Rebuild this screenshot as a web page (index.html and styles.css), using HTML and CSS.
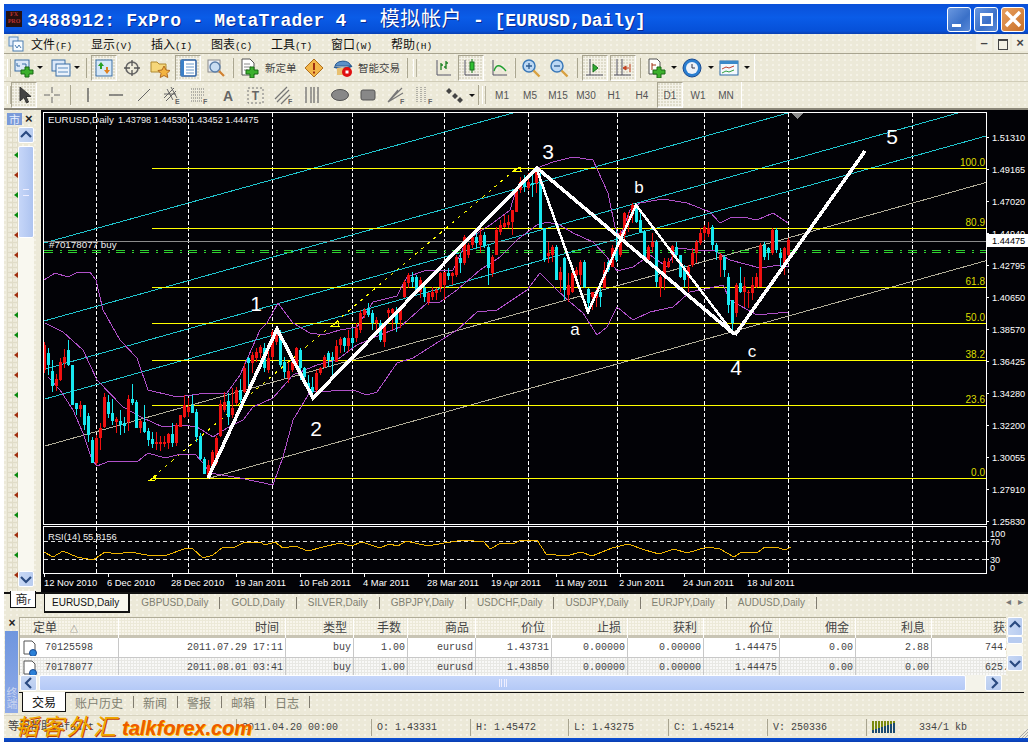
FILE: index.html
```html
<!DOCTYPE html>
<html lang="zh">
<head>
<meta charset="utf-8">
<title>MetaTrader 4</title>
<link rel="stylesheet" href="styles.css">
</head>
<body>
<div class="window">
  <header class="titlebar">
    <div class="appicon">FX<br>PRO</div>
    <div class="titletext"><span class="tt-a">3488912: FxPro - MetaTrader 4 - </span><span class="cjk">模拟帐户</span> - [EURUSD,Daily]</div>
    <div class="winbtns">
      <div class="wb"><span class="wb-min"></span></div>
      <div class="wb"><span class="wb-max"></span></div>
      <div class="wb wb-close"><svg viewBox="0 0 20 20" width="20" height="20"><path d="M3 3L17 17M17 3L3 17" stroke="#fff" stroke-width="3.4"/></svg></div>
    </div>
  </header>

  <nav class="menubar">
    <svg class="menuicon" viewBox="0 0 16 16" width="16" height="16"><rect x="1" y="1" width="9" height="9" fill="#dfeaf8" stroke="#5a8cc0"/><rect x="5" y="5" width="10" height="10" fill="#f6fbff" stroke="#4a7cb0"/><path d="M7 9l2 3 2-3 2 3" stroke="#4a7cb0" fill="none"/></svg>
    <span class="mi">文件<em>(F)</em></span><span class="mi">显示<em>(V)</em></span><span class="mi">插入<em>(I)</em></span><span class="mi">图表<em>(C)</em></span><span class="mi">工具<em>(T)</em></span><span class="mi">窗口<em>(W)</em></span><span class="mi">帮助<em>(H)</em></span>
    <div class="mdibtns"><span>&#8211;</span><span class="mdi-r"></span><span>&#215;</span></div>
  </nav>

  <div class="toolrow">
    <div class="toolbar tb1">
      <i class="grip w8"></i>
      <b class="btn w24"><svg class="i" viewBox="0 0 20 20"><rect x="1" y="2" width="14" height="11" fill="#dbe8f8" stroke="#3a6ea5"/><path d="M3 5v3h3M8 6h4v3" stroke="#3a6ea5" fill="none"/><path d="M11 9h4v3h4v4h-4v3h-4v-3H7v-4h4z" fill="#3cb02c" stroke="#1b6b14"/></svg></b>
      <b class="dd w8"></b><i class="w4"></i>
      <b class="btn w25"><svg class="i" viewBox="0 0 20 20"><rect x="1" y="2" width="13" height="11" fill="#dbe8f8" stroke="#3a6ea5"/><rect x="5" y="6" width="14" height="12" fill="#eaf2fb" stroke="#3a6ea5"/><path d="M7 10h10M7 14h10" stroke="#5a8cc0"/></svg></b>
      <b class="dd w8"></b>
      <i class="sep w9"></i>
      <b class="btn w28 on"><svg class="i" viewBox="0 0 20 20"><rect x="2" y="2" width="16" height="16" fill="#d6e8f8" stroke="#3a6ea5"/><path d="M7 4l3 4H8v3H6V8H4z" fill="#28a028"/><path d="M13 16l-3-4h2V9h2v3h2z" fill="#e08020"/></svg></b>
      <b class="btn w28"><svg class="i" viewBox="0 0 20 20"><circle cx="10" cy="10" r="6" fill="none" stroke="#666" stroke-width="1.6"/><path d="M10 2v6M10 12v6M2 10h6M12 10h6" stroke="#555" stroke-width="1.3"/></svg></b>
      <b class="btn w28"><svg class="i" viewBox="0 0 20 20"><path d="M1 4h6l2 2h7v8H1z" fill="#f6d77a" stroke="#b08a30"/><path d="M14 8l2 4 4 .5-3 3 .8 4-3.800-2-3.800 2 .8-4-3-3 4-.5z" fill="#f3b340" stroke="#b06a20"/></svg></b>
      <b class="btn w28 on"><svg class="i" viewBox="0 0 20 20"><rect x="3" y="2" width="15" height="16" rx="1" fill="#fff" stroke="#2a5ea0" stroke-width="1.5"/><path d="M3 2v16h3V2z" fill="#3a80c8"/><path d="M8 6h8M8 9h8M8 12h8M8 15h8" stroke="#6a98c8"/></svg></b>
      <b class="btn w28"><svg class="i" viewBox="0 0 20 20"><rect x="2" y="2" width="12" height="12" fill="#eef2f8" stroke="#888"/><circle cx="9" cy="9" r="5" fill="#c8ddf2" stroke="#5a7ea8" stroke-width="1.4"/><path d="M13 13l5 5" stroke="#d08030" stroke-width="2.200"/></svg></b>
      <i class="sep w6"></i>
      <b class="btn w64"><svg class="i" viewBox="0 0 20 20"><path d="M3 1h8l4 4v12H3z" fill="#fff" stroke="#555"/><path d="M5 6h6M5 9h7M5 12h4" stroke="#888"/><path d="M11 9h4v3h4v4h-4v4h-4v-4H7v-4h4z" fill="#3cb02c" stroke="#1b6b14"/></svg><span class="tt">新定单</span></b>
      <b class="btn w28"><svg class="i" viewBox="0 0 20 20"><path d="M10 1l9 9-9 9-9-9z" fill="#f2b64a" stroke="#b0701c"/><path d="M10 5v7M10 13.500v2" stroke="#a03010" stroke-width="2"/></svg></b>
      <i class="w1"></i>
      <b class="btn w75"><svg class="i" viewBox="0 0 20 20"><path d="M2 8c1-6 14-7 16 0z" fill="#5a90c8" stroke="#2a5a90"/><path d="M1 9c5 2 13 2 18-1" stroke="#2a5a90" fill="none" stroke-width="1.5"/><path d="M4 10h11v7H4z" fill="#e8c070"/><circle cx="14" cy="14" r="5" fill="#e01010"/><rect x="12.500" y="12.500" width="3" height="3" fill="#fff"/></svg><span class="tt">智能交易</span></b>
      <i class="sep w6"></i><i class="grip w19"></i>
      <b class="btn w28"><svg class="i" viewBox="0 0 20 20"><path d="M4 2v15h14" stroke="#556" fill="none"/><path d="M8 5v7M8 7h2M13 3v8M13 5h2M11 9h2" stroke="#1a8020" fill="none" stroke-width="1.300"/></svg></b>
      <b class="btn w28 on"><svg class="i" viewBox="0 0 20 20"><path d="M4 2v15h14" stroke="#556" fill="none"/><path d="M11 1v14" stroke="#1a8020"/><rect x="9" y="4" width="4" height="8" fill="#30c030" stroke="#1a7020"/></svg></b>
      <b class="btn w28"><svg class="i" viewBox="0 0 20 20"><path d="M4 2v15h14" stroke="#556" fill="none"/><path d="M5 13c2-7 6-7 12 0" stroke="#20a030" fill="none" stroke-width="1.300"/></svg></b>
      <i class="sep w4"></i>
      <b class="btn w28"><svg class="i" viewBox="0 0 20 20"><circle cx="8" cy="8" r="6" fill="#bcd8f4" stroke="#3a78b8" stroke-width="1.500"/><path d="M5 8h6M8 5v6" stroke="#2a5a90" stroke-width="1.300"/><path d="M12.500 12.500l6 6" stroke="#d8a040" stroke-width="2.400"/></svg></b>
      <b class="btn w28"><svg class="i" viewBox="0 0 20 20"><circle cx="8" cy="8" r="6" fill="#bcd8f4" stroke="#3a78b8" stroke-width="1.500"/><path d="M5 8h6" stroke="#2a5a90" stroke-width="1.300"/><path d="M12.500 12.500l6 6" stroke="#d8a040" stroke-width="2.400"/></svg></b>
      <i class="sep w8"></i>
      <b class="btn w28 on"><svg class="i" viewBox="0 0 20 20"><path d="M5 1v16M1 17h17" stroke="#556" fill="none"/><path d="M8 6l5 4-5 4z" fill="#30b030" stroke="#1a7020"/></svg></b>
      <b class="btn w28 on"><svg class="i" viewBox="0 0 20 20"><path d="M4 1v16M9 1v16M1 17h17" stroke="#556" fill="none"/><path d="M17 6v8M16 10l-5 0M13 8l-3 2 3 2z" stroke="#c04020" fill="#e05020"/></svg></b>
      <i class="sep w6"></i>
      <b class="btn w26"><svg class="i" viewBox="0 0 20 20"><path d="M3 1h8l3 3v12H3z" fill="#fff" stroke="#555"/><path d="M6 5v7M6 7h4" stroke="#a03010"/><path d="M11 9h4v3h4v4h-4v4h-4v-4H7v-4h4z" fill="#3cb02c" stroke="#1b6b14"/></svg></b><b class="dd w10"></b>
      <b class="btn w26"><svg class="i" viewBox="0 0 20 20"><circle cx="10" cy="10" r="9" fill="#2a7ed0" stroke="#1a4a90"/><circle cx="10" cy="10" r="6" fill="#eef2f8"/><path d="M10 6v4h3" stroke="#334" fill="none"/></svg></b><b class="dd w11"></b>
      <b class="btn w26"><svg class="i" viewBox="0 0 20 20"><rect x="1" y="3" width="18" height="14" fill="#f4f8fc" stroke="#2a6aa8"/><path d="M1 3h18v3H1z" fill="#3a88c8"/><path d="M3 11l4-2 3 1 5-2" stroke="#c04030" fill="none"/><path d="M3 15l4-2 3 1 5-2" stroke="#30a040" fill="none"/></svg></b><b class="dd w10"></b>
    </div>
  </div>

  <div class="toolrow tall26">
    <div class="toolbar tb2">
      <i class="grip w6"></i>
      <b class="btn w28 on"><svg class="i" viewBox="0 0 20 20"><path d="M6 2v14l4-3.500 2.500 5.500 2-1-2.500-5.500h5z" fill="#444" stroke="#333"/></svg></b>
      <b class="btn w28"><svg class="i" viewBox="0 0 20 20"><path d="M10 2v6M10 12v6M2 10h6M12 10h6" stroke="#666"/></svg></b>
      <i class="sep w8"></i>
      <b class="btn w28"><svg class="i" viewBox="0 0 20 20"><path d="M10 3v14" stroke="#555" stroke-width="1.300"/></svg></b>
      <b class="btn w28"><svg class="i" viewBox="0 0 20 20"><path d="M3 10h14" stroke="#555" stroke-width="1.300"/></svg></b>
      <b class="btn w28"><svg class="i" viewBox="0 0 20 20"><path d="M4 16L16 4" stroke="#666"/></svg></b>
      <b class="btn w28"><svg class="i" viewBox="0 0 20 20"><path d="M2 13L12 3M4 16L14 6M5 4l6 11M9 2l6 11M2 9h12" stroke="#666" fill="none"/><text x="13" y="19" class="ic-l">E</text></svg></b>
      <b class="btn w28"><svg class="i" viewBox="0 0 20 20"><path d="M1 4h14M1 7h14M1 10h14M1 13h12M1 16h12" stroke="#777" stroke-dasharray="1 1" fill="none"/><text x="13" y="19" class="ic-l">F</text></svg></b>
      <b class="btn w28"><svg class="i" viewBox="0 0 20 20"><text x="10" y="16" class="ic-a">A</text></svg></b>
      <b class="btn w28"><svg class="i" viewBox="0 0 20 20"><rect x="2" y="3" width="15" height="15" fill="none" stroke="#777" stroke-dasharray="2 2"/><text x="9.500" y="15" class="ic-t">T</text></svg></b>
      <b class="btn w28"><svg class="i" viewBox="0 0 20 20"><path d="M1 14L13 2M3 17L15 5M7 19l9-9" stroke="#777" fill="none" stroke-width="1.200"/><text x="14" y="19" class="ic-l">F</text></svg></b>
      <b class="btn w28"><svg class="i" viewBox="0 0 20 20"><path d="M4 2v16M9 2v16M12 2v16M16 2v16" stroke="#666" stroke-width="1.200"/></svg></b>
      <b class="btn w28"><svg class="i" viewBox="0 0 20 20"><ellipse cx="10" cy="10" rx="8.500" ry="5.500" fill="#888" stroke="#555"/></svg></b>
      <b class="btn w28"><svg class="i" viewBox="0 0 20 20"><rect x="3" y="5" width="14" height="10" rx="2" fill="#888" stroke="#555"/></svg></b>
      <b class="btn w28"><svg class="i" viewBox="0 0 20 20"><path d="M2 17L16 3M2 17L17 8M2 17l10-12" stroke="#777" fill="none" stroke-width="1.200"/><text x="14" y="19" class="ic-l">F</text></svg></b>
      <b class="btn w28"><svg class="i" viewBox="0 0 20 20"><path d="M3 2v15M7 2v15M11 2v15" stroke="#777" stroke-dasharray="1 1" fill="none"/><text x="14" y="19" class="ic-l">F</text></svg></b>
      <i class="w3"></i>
      <b class="btn w26"><svg class="i" viewBox="0 0 20 20"><path d="M5 3l3 3-3 3-3-3zM11 8l3 3-3 3-3-3zM16 12l3 3-3 3-3-3z" fill="#444"/></svg></b><b class="dd w9"></b>
      <i class="sep w3"></i><i class="grip w9"></i>
      <b class="btn w28 tf">M1</b><b class="btn w28 tf">M5</b><b class="btn w28 tf">M15</b><b class="btn w28 tf">M30</b><b class="btn w28 tf">H1</b><b class="btn w28 tf">H4</b><b class="btn w28 tf on">D1</b><b class="btn w28 tf">W1</b><b class="btn w28 tf">MN</b>
    </div>
  </div>
  <div class="rule"></div>

  <main class="main">
    <aside class="side">
      <div class="side-head"><span class="side-tag">市</span><span class="side-x">&#215;</span></div>
      <div class="side-body">
        <div class="rows">
          <i class="g"></i><i class="r"></i><i class="g"></i><i class="g"></i><i class="r"></i><i class="r"></i><i class="r"></i><i class="r"></i><i class="g"></i><i class="g"></i><i class="r"></i><i class="r"></i><i class="g"></i><i class="r"></i><i class="r"></i><i class="r"></i><i class="g"></i><i class="r"></i><i class="g"></i><i class="r"></i><i class="g"></i><i class="r"></i>
        </div>
        <div class="vs">
          <span class="sbtn"><svg viewBox="0 0 16 16" width="16" height="16"><path d="M3 10l5-5 5 5" fill="none" stroke="#2a4a80" stroke-width="2.200"/></svg></span>
          <span class="thumb"><u></u></span>
          <span class="track"></span>
          <span class="sbtn"><svg viewBox="0 0 16 16" width="16" height="16"><path d="M3 6l5 5 5-5" fill="none" stroke="#2a4a80" stroke-width="2.200"/></svg></span>
        </div>
      </div>
    </aside>

    <svg class="chart" viewBox="41 110 987 482" width="987" height="482">
      <path class="grid" d="M96.500 113V524M188.500 113V524M272.500 113V524M352.500 113V524M444.500 113V524M528.500 113V524M617.500 113V524M704.500 113V524M788.500 113V524M912.500 113V524M96.500 527V573M188.500 527V573M272.500 527V573M352.500 527V573M444.500 527V573M528.500 527V573M617.500 527V573M704.500 527V573M788.500 527V573M912.500 527V573"/>
      <path class="cyanl" d="M44 243L513 113M44 321L788 113M45 369L958 113M45 399L986 136"/>
      <path class="tanl" d="M45 446L986 182.500M210 478L986 260.700"/>
      <path class="fib" d="M152 168.500H986M152 228.500H986M152 287.500H986M152 323.500H986M152 360.500H986M152 405.500H986M152 478.500H986"/>
      <path class="bidl" d="M44 241.500H986"/>
      <path class="ordl" d="M44 250.500H986M44 252.500H986"/>
      <path class="fibd" d="M153 477L517 168"/>
      <path class="fiba" d="M150 480l6-4-1 4zM332 326l6-5 1 5zM514 171l6-4 1 4z"/>
      <polyline class="bb" points="44,280 55,273 68,277 78,272 90,272 96,280 103,310 120,340 137,358 148,390 177,397 207,393 227,393 240,375 248,357 260,330 267,323 278,303 293,323 310,333 323,335 340,330 357,327 373,302 397,296 407,277 427,270 453,270 467,240 493,223 510,210 517,187 537,168 553,162 573,157 593,160 608,193 615,227 620,237 630,210 640,203 663,199 687,203 710,212 720,223 730,218 743,217 757,220 773,213 788,223"/>
      <polyline class="bb" points="45,323 63,332 83,350 97,380 123,407 143,418 163,427 183,425 197,427 213,437 227,428 243,420 253,407 273,398 293,375 317,365 337,360 357,345 380,335 400,327 427,303 440,302 457,290 480,270 500,257 517,240 537,225 547,222 560,225 573,233 593,242 607,257 617,271 633,267 650,255 667,267 677,248 697,250 713,250 730,260 760,268 780,265 788,267"/>
      <polyline class="bb" points="48,377 60,390 73,410 83,433 92,460 97,466 110,461 137,462 148,453 165,458 177,455 195,454 203,463 210,473 240,478 273,485 283,457 293,420 310,392 353,390 367,395 377,392 397,363 413,358 457,330 477,312 497,310 527,290 540,273 557,290 570,302 583,313 597,335 607,327 617,307 633,320 650,312 673,307 690,292 710,288 723,285 730,300 757,315 788,312"/>
      <path class="cw" d="M48.500 348V375M52.500 360V392M68.500 340V366M72.500 365V405M76.500 403V415M84.500 405V430M88.500 413V442M92.500 437V463M108.500 395V418M112.500 399V425M120.500 410V435M124.500 417V433M132.500 384V405M136.500 400V428M144.500 405V433M148.500 428V446M152.500 432V448M172.500 423V447M192.500 395V413M196.500 409V442M200.500 433V460M204.500 457V474M228.500 393V425M240.500 379V403M248.500 357V387M264.500 343V372M280.500 330V367M284.500 357V378M300.500 348V380M304.500 367V382M308.500 375V390M312.500 377V393M328.500 351V367M332.500 352V377M344.500 337V352M352.500 328V348M368.500 303V317M372.500 310V330M380.500 320V342M396.500 307V332M412.500 272V287M416.500 275V293M424.500 285V302M448.500 268V280M460.500 253V273M476.500 232V248M484.500 232V248M488.500 245V285M524.500 175V192M532.500 175V197M540.500 172V228M544.500 228V262M556.500 245V280M564.500 257V300M584.500 260V288M588.500 288V310M600.500 288V307M608.500 260V272M616.500 230V262M636.500 205V223M640.500 212V233M644.500 230V260M656.500 240V287M676.500 242V260M680.500 255V278M684.500 265V287M712.500 225V250M716.500 243V260M724.500 255V277M728.500 273V313M732.500 300V333M740.500 267V293M764.500 242V260M768.500 247V260M776.500 228V253M780.500 248V267"/>
      <path class="cb" d="M48.500 353V365M52.500 371V386M68.500 350V365M72.500 365V405M76.500 403V409M84.500 405V425M88.500 416V435M92.500 440V463M108.500 402V414M112.500 413V421M120.500 421V425M124.500 423V426M132.500 399V403M136.500 402V428M144.500 422V432M148.500 431V440M152.500 439V444M172.500 434V443M192.500 405V413M196.500 412V437M200.500 436V459M204.500 459V474M228.500 401V417M240.500 390V400M248.500 358V363M264.500 348V368M280.500 337V365M284.500 362V372M300.500 350V368M304.500 368V377M308.500 383V388M312.500 387V392M328.500 353V360M332.500 357V360M344.500 338V346M352.500 338V343M368.500 308V315M372.500 313V323M380.500 323V340M396.500 313V323M412.500 277V282M416.500 277V292M424.500 288V297M448.500 273V276M460.500 258V263M476.500 237V243M484.500 235V246M488.500 247V268M524.500 182V187M532.500 183V185M540.500 180V228M544.500 228V260M556.500 247V280M564.500 258V290M584.500 262V287M588.500 289V303M600.500 292V297M608.500 262V270M616.500 247V260M636.500 205V222M640.500 220V232M644.500 232V258M656.500 242V282M676.500 247V255M680.500 255V277M684.500 270V280M712.500 227V245M716.500 245V252M724.500 257V270M728.500 277V305M732.500 300V323M740.500 283V292M764.500 245V257M768.500 248V253M776.500 230V250M780.500 253V258"/>
      <path class="rw" d="M44.500 342V373M56.500 374V391M60.500 358V381M64.500 349V368M80.500 401V417M96.500 435V465M100.500 423V450M104.500 393V428M116.500 417V433M128.500 395V431M140.500 420V433M156.500 432V450M160.500 436V451M164.500 436V447M168.500 433V449M176.500 423V446M180.500 415V427M184.500 395V418M188.500 398V417M208.500 460V477M212.500 450V470M216.500 436V465M220.500 400V437M224.500 392V412M232.500 388V418M236.500 387V405M244.500 363V393M252.500 352V373M256.500 348V362M260.500 345V358M268.500 350V373M272.500 330V360M276.500 332V345M288.500 362V383M292.500 355V372M296.500 347V368M316.500 370V393M320.500 367V375M324.500 355V368M336.500 340V362M340.500 337V353M348.500 330V352M356.500 323V342M360.500 310V333M364.500 308V318M376.500 317V330M384.500 323V347M388.500 308V323M392.500 308V330M400.500 307V328M404.500 280V298M408.500 273V288M420.500 277V298M428.500 292V305M432.500 287V300M436.500 288V300M440.500 272V292M444.500 272V300M452.500 272V285M456.500 255V277M464.500 235V265M468.500 243V258M472.500 235V248M480.500 228V253M492.500 255V277M496.500 227V255M500.500 220V235M504.500 215V228M508.500 215V228M512.500 210V235M516.500 190V212M520.500 177V193M528.500 173V190M536.500 170V193M548.500 242V263M552.500 245V262M560.500 267V292M568.500 273V302M572.500 272V293M576.500 267V283M580.500 260V285M592.500 292V310M596.500 288V307M604.500 262V288M612.500 245V267M620.500 230V257M624.500 212V240M628.500 212V232M632.500 203V223M648.500 245V262M652.500 233V252M660.500 275V297M664.500 258V290M668.500 258V268M672.500 245V263M688.500 265V292M692.500 248V267M696.500 240V263M700.500 228V245M704.500 225V240M708.500 222V237M720.500 253V277M736.500 283V317M744.500 277V307M748.500 290V308M752.500 277V300M756.500 273V288M760.500 243V287M772.500 228V255M784.500 247V275M788.500 238V257"/>
      <path class="rb" d="M44.500 345V370M56.500 379V386M60.500 362V380M64.500 357V363M80.500 405V409M96.500 438V463M100.500 428V438M104.500 397V427M116.500 419V422M128.500 399V422M140.500 421V428M156.500 442V444M160.500 442V444M164.500 442V444M168.500 434V443M176.500 425V443M180.500 415V427M184.500 405V417M188.500 407V412M208.500 465V477M212.500 452V468M216.500 438V463M220.500 404V436M224.500 402V410M232.500 408V415M236.500 390V403M244.500 368V392M252.500 355V363M256.500 352V358M260.500 347V353M268.500 358V370M272.500 332V357M276.500 335V342M288.500 371V378M292.500 362V370M296.500 348V367M316.500 373V390M320.500 368V373M324.500 357V367M336.500 346V362M340.500 339V345M348.500 338V346M356.500 328V338M360.500 313V330M364.500 310V315M376.500 320V323M384.500 325V342M388.500 310V313M392.500 309V313M400.500 310V320M404.500 282V297M408.500 275V283M420.500 280V292M428.500 293V302M432.500 292V297M436.500 290V293M440.500 273V287M444.500 272V285M452.500 273V276M456.500 257V275M464.500 237V263M468.500 245V255M472.500 237V245M480.500 235V245M492.500 257V273M496.500 230V255M500.500 225V232M504.500 223V227M508.500 222V225M512.500 210V222M516.500 190V212M520.500 182V190M528.500 182V188M536.500 172V183M548.500 253V256M552.500 247V255M560.500 272V280M568.500 285V295M572.500 273V292M576.500 270V275M580.500 262V275M592.500 292V297M596.500 292V298M604.500 270V288M612.500 248V267M620.500 233V255M624.500 213V235M628.500 218V223M632.500 205V215M648.500 247V260M652.500 242V247M660.500 277V287M664.500 261V277M668.500 262V267M672.500 246V255M688.500 267V277M692.500 253V265M696.500 242V253M700.500 233V243M704.500 227V233M708.500 228V234M720.500 255V260M736.500 285V313M744.500 286V292M748.500 292V293M752.500 285V293M756.500 277V287M760.500 245V287M772.500 230V253M784.500 248V263M788.500 240V255"/>
      <path class="wave" d="M208 478L277 329L313 398L537 168L734 334M735 335L865 151"/>
      <path class="wave2" d="M537 170L588 312L636 205L733 333"/>
      <rect class="frame" x="43.500" y="112.500" width="942.500" height="411.500"/>
      <rect class="frame" x="43.500" y="526.500" width="942.500" height="46.500"/>
      <path class="levels" d="M44 541.500H986M44 559.500H986"/>
      <polyline class="rsi" points="44,552 53,557 63,551 77,557 93,560 105,552 117,554 130,552 147,555 167,555 187,548 193,549 203,558 213,555 223,547 233,548 243,543 260,542 265,545 275,542 283,548 295,546 308,551 323,547 340,543 351,546 362,542 380,548 389,544 398,546 406,541 428,546 444,543 464,540 484,542 490,549 501,543 515,543 521,540 537,540 546,554 566,556 581,552 592,556 612,548 628,544 645,550 659,554 674,549 687,553 707,547 720,549 734,557 740,553 758,552 765,547 776,547 785,550 791,547"/>
      <path class="tri" d="M791 113h12l-6 6z"/>
      <path class="ticks" d="M986 137.500h3M986 169.500h3M986 201.500h3M986 233.500h3M986 265.500h3M986 297.500h3M986 329.500h3M986 361.500h3M986 393.500h3M986 425.500h3M986 457.500h3M986 489.500h3M986 521.500h3M986 541.500h3M986 559.500h3M44.500 573v4M108.500 573v4M172.500 573v4M236.500 573v4M300.500 573v4M364.500 573v4M428.500 573v4M492.500 573v4M556.500 573v4M620.500 573v4M684.500 573v4M748.500 573v4"/>
      <text class="lab" x="48" y="123">EURUSD,Daily</text>
      <text class="lab lab-v" x="118" y="123">1.43798 1.44530 1.43452 1.44475</text>
      <text class="lab" x="49" y="248">#70178077 buy</text>
      <text class="lab lab-r" x="48" y="540">RSI(14) 55.8156</text>
      <g class="fibt">
        <text x="985" y="166">100.0</text><text x="985" y="226">80.9</text><text x="985" y="285">61.8</text><text x="985" y="321">50.0</text><text x="985" y="358">38.2</text><text x="985" y="403">23.6</text><text x="985" y="476">0.0</text>
      </g>
      <g class="wavet">
        <text x="256" y="311">1</text><text x="316" y="436">2</text><text x="548" y="159">3</text><text x="736" y="375">4</text><text x="892" y="144">5</text>
        <text class="sm" x="575" y="335">a</text><text class="sm" x="639" y="193">b</text><text class="sm" x="752" y="357">c</text>
      </g>
      <g class="axis">
        <text x="992" y="141">1.51310</text><text x="992" y="173">1.49165</text><text x="992" y="205">1.47020</text><text x="992" y="237">1.44940</text><text x="992" y="269">1.42795</text><text x="992" y="301">1.40650</text><text x="992" y="333">1.38570</text><text x="992" y="365">1.36425</text><text x="992" y="397">1.34280</text><text x="992" y="429">1.32200</text><text x="992" y="461">1.30055</text><text x="992" y="493">1.27910</text><text x="992" y="525">1.25830</text>
        <text x="990" y="537">100</text><text x="990" y="545">70</text><text x="990" y="563">30</text><text x="990" y="571">0</text>
      </g>
      <rect class="tag" x="987" y="234" width="41" height="13"/>
      <text class="tagt" x="992" y="244">1.44475</text>
      <g class="dates">
        <text x="44" y="586">12 Nov 2010</text><text x="107" y="586">6 Dec 2010</text><text x="171" y="586">28 Dec 2010</text><text x="235" y="586">19 Jan 2011</text><text x="299" y="586">10 Feb 2011</text><text x="363" y="586">4 Mar 2011</text><text x="427" y="586">28 Mar 2011</text><text x="491" y="586">19 Apr 2011</text><text x="555" y="586">11 May 2011</text><text x="619" y="586">2 Jun 2011</text><text x="683" y="586">24 Jun 2011</text><text x="747" y="586">18 Jul 2011</text>
      </g>
    </svg>
  </main>

  <div class="charttabs">
    <div class="sidetab">商<small>r</small></div>
    <div class="ct ct-on">EURUSD,Daily</div>
    <div class="ct">GBPUSD,Daily</div><div class="ct">GOLD,Daily</div><div class="ct">SILVER,Daily</div><div class="ct">GBPJPY,Daily</div><div class="ct">USDCHF,Daily</div><div class="ct">USDJPY,Daily</div><div class="ct">EURJPY,Daily</div><div class="ct">AUDUSD,Daily</div>
    <div class="ct-nav"><span>&#9666;</span><span>&#9656;</span></div>
  </div>

  <section class="terminal">
    <div class="term-side"><span class="term-x">&#215;</span><div class="term-bar">终端</div></div>
    <div class="term-main">
      <div class="term-top">
        <div class="tablewrap">
          <div class="trow thead"><span class="lft">定单<sub>&#9651;</sub></span><span>时间</span><span>类型</span><span>手数</span><span>商品</span><span>价位</span><span>止损</span><span>获利</span><span>价位</span><span>佣金</span><span>利息</span><span>获利</span></div>
          <div class="trow"><span class="lft"><svg class="doc" viewBox="0 0 14 16" width="14" height="16"><path d="M1 1h8l3 3v10H1z" fill="#fff" stroke="#555"/><circle cx="10" cy="13" r="3.500" fill="#2a80d8" stroke="#1a4a90"/></svg>70125598</span><span>2011.07.29 17:11</span><span>buy</span><span>1.00</span><span>eurusd</span><span>1.43731</span><span>0.00000</span><span>0.00000</span><span>1.44475</span><span>0.00</span><span>2.88</span><span>744.57</span></div>
          <div class="trow alt"><span class="lft"><svg class="doc" viewBox="0 0 14 16" width="14" height="16"><path d="M1 1h8l3 3v10H1z" fill="#fff" stroke="#555"/><circle cx="10" cy="13" r="3.500" fill="#2a80d8" stroke="#1a4a90"/></svg>70178077</span><span>2011.08.01 03:41</span><span>buy</span><span>1.00</span><span>eurusd</span><span>1.43850</span><span>0.00000</span><span>0.00000</span><span>1.44475</span><span>0.00</span><span>0.00</span><span>625.00</span></div>
        </div>
        <div class="tvs">
          <span class="sbtn tall"><svg viewBox="0 0 16 16" width="16" height="16"><path d="M3 10l5-5 5 5" fill="none" stroke="#2a4a80" stroke-width="2.200"/></svg></span>
          <span class="tvthumb"></span>
          <span class="track"></span>
          <span class="sbtn"><svg viewBox="0 0 16 16" width="16" height="16"><path d="M3 6l5 5 5-5" fill="none" stroke="#2a4a80" stroke-width="2.200"/></svg></span>
        </div>
      </div>
      <div class="hs">
        <span class="hbtn"><svg viewBox="0 0 16 16" width="16" height="16"><path d="M10 3l-5 5 5 5" fill="none" stroke="#2a4a80" stroke-width="2.200"/></svg></span>
        <span class="hthumb"><u></u></span>
        <span class="hbtn"><svg viewBox="0 0 16 16" width="16" height="16"><path d="M6 3l5 5-5 5" fill="none" stroke="#2a4a80" stroke-width="2.200"/></svg></span>
      </div>
      <div class="ttabs"><div class="tt-on">交易</div><div class="tt-i">账户历史</div><div class="tt-i">新闻</div><div class="tt-i">警报</div><div class="tt-i">邮箱</div><div class="tt-i">日志</div></div>
    </div>
  </section>

  <footer class="status">
    <span class="s1">等用帮助</span><span class="s2">Default</span><span class="s3">2011.04.20 00:00</span><span class="s4">O: 1.43331</span><span class="s5">H: 1.45472</span><span class="s6">L: 1.43275</span><span class="s7">C: 1.45214</span><span class="s8">V: 250336</span>
    <span class="s9"><svg viewBox="0 0 24 12" width="24" height="12"><path d="M1 0v12M4 0v12M7 0v12M10 0v12M13 0v12M16 0v12M19 0v12M22 0v12" stroke="#7a8a10" stroke-width="2"/><path d="M1 9v3M4 8v4M7 7v5M10 6v6M13 5v7M16 4v8M19 3v9M22 2v10" stroke="#1a4a70" stroke-width="2"/></svg><em>334/1 kb</em></span>
    <div class="logo"><span class="logo-c">韬客外汇</span> <span class="logo-e">talkforex.com</span></div>
    <svg class="sizegrip" viewBox="0 0 10 10" width="10" height="10"><path d="M10 1L1 10M10 4L4 10M10 7L7 10" stroke="#aaa"/></svg>
  </footer>
  <div class="bluefoot"></div>
</div>
</body>
</html>
```

FILE: styles.css
```css
* { box-sizing: border-box; }
html, body { margin: 0; padding: 0; background: #fff; }
body { width: 1032px; height: 742px; overflow: hidden; font-family: "Liberation Sans", "Noto Sans CJK SC", sans-serif; }
.window {
  margin: 4px 4px 0;
  width: 1024px;
  height: 738px;
  display: flex;
  flex-direction: column;
  background-color: #ece9d8;
  background-image: radial-gradient(circle at 1px 1px, #f8f6ec .6px, transparent 1px);
  background-size: 6px 5px;
  overflow: hidden;
}

/* title bar */
.titlebar {
  height: 30px;
  display: flex;
  align-items: center;
  background: linear-gradient(#0a50d8, #0a5ce8 45%, #0650d8 90%, #0a3fb0);
  position: relative;
}
.appicon {
  width: 16px; height: 16px; margin-left: 2px; background: #241010;
  color: #b83030; font: bold 6px/7px "Liberation Serif", serif; text-align: center;
}
.titletext {
  margin-left: 5px;
  font: bold 18px/24px "Liberation Mono", "Noto Sans CJK SC", monospace;
  color: #fff;
  white-space: pre;
  text-shadow: 1px 1px 0 #0a2a90;
}
.tt-a { letter-spacing: .22px; }
.titletext .cjk { font: 20px/24px "Noto Sans CJK SC", sans-serif; letter-spacing: .6px; }
.winbtns { margin-left: auto; display: flex; gap: 3px; margin-right: 3px; }
.wb {
  width: 24px; height: 25px; border: 1px solid #fff; border-radius: 3px;
  background: linear-gradient(135deg, #6a98e0, #3a70c8 60%, #5a8ad8);
  position: relative; display: flex; align-items: center; justify-content: center;
}
.wb-close { background: linear-gradient(135deg, #e8a060, #c87028); }
.wb-min { position: absolute; left: 4px; bottom: 4px; width: 9px; height: 3px; background: #fff; }
.wb-max { width: 13px; height: 13px; border: 2px solid #fff; border-top-width: 3px; }

/* menu */
.menubar { height: 20px; display: flex; align-items: center; border-bottom: 1px solid #a8a490; font-size: 12px; color: #111; position: relative; }
.menuicon { margin-left: 4px; margin-right: 7px; flex: none; }
.mi { width: 60px; white-space: nowrap; font-family: "Noto Sans CJK SC", sans-serif; line-height: 18px; }
.mi em { font: normal 9.500px "Liberation Mono", monospace; }
.mdibtns { position: absolute; right: 0; top: 1px; display: flex; gap: 2px; }
.mdibtns span { width: 16px; height: 16px; background: #f2f0e4; font: bold 13px/15px "Liberation Sans", sans-serif; text-align: center; color: #444; position: relative; }
.mdi-r::after { content: ""; position: absolute; left: 4px; top: 4px; width: 8px; height: 8px; border: 1px solid #444; border-top-width: 2px; }

/* toolbars */
.toolrow { height: 28px; display: flex; border-bottom: 1px solid #d0ccb8; }
.tall26 { height: 26px; border-bottom: 0; }
.toolbar { display: flex; align-items: center; height: 100%; border-right: 1px solid #fff; }
.tb1 { width: 751px; }
.tb2 { width: 738px; }
.btn { display: flex; align-items: center; justify-content: center; height: 26px; font-weight: normal; flex: none; }
.i { width: 20px; height: 20px; flex: none; }
.on { background-color: #f4f2e8; background-image: radial-gradient(circle at 1px 1px, #d8d4c0 .6px, transparent 1px); background-size: 3px 3px; border: 1px solid; border-color: #a8a490 #fff #fff #a8a490; margin: 0 1px; }
.toolbar > i { flex: none; height: 24px; }
.grip { position: relative; }
.grip::after { content: ""; position: absolute; left: 3px; top: 3px; bottom: 3px; width: 2px; border-left: 1px solid #fff; border-right: 1px solid #b8b4a0; }
.sep { position: relative; }
.sep::after { content: ""; position: absolute; left: 50%; top: 2px; bottom: 2px; width: 1px; background: #aaa690; }
.w1 { width: 1px; } .w3 { width: 3px; } .w4 { width: 4px; } .w6 { width: 6px; } .w8 { width: 8px; } .w9 { width: 9px; } .w10 { width: 10px; } .w11 { width: 11px; } .w19 { width: 19px; }
.w24 { width: 24px; } .w25 { width: 25px; } .w26 { width: 26px; } .w28 { width: 28px; } .w64 { width: 64px; justify-content: flex-start; padding-left: 3px; gap: 6px; } .w75 { width: 75px; justify-content: flex-start; padding-left: 4px; gap: 5px; }
.btn.on.w28 { width: 26px; }
.dd { display: flex; align-items: center; justify-content: center; height: 26px; flex: none; }
.dd::after { content: ""; border: 3px solid transparent; border-top: 3px solid #111; border-bottom: 0; }
.tt { font: 12px "Noto Sans CJK SC", sans-serif; color: #444; white-space: nowrap; letter-spacing: -.3px; }
.tb1 .w75 .tt { font-size: 10.500px; letter-spacing: 0; }
.tb1 .w64 .tt { font-size: 10.500px; letter-spacing: 0; }
.tf { font-size: 10px; color: #555; }
.ic-l { font: bold 7px "Liberation Sans", sans-serif; fill: #666; }
.ic-a { font: bold 14px "Liberation Sans", sans-serif; fill: #666; text-anchor: middle; }
.ic-t { font: bold 12px "Liberation Sans", sans-serif; fill: #666; text-anchor: middle; }
.rule { height: 2px; background: #8a8678; }

/* main */
.main { height: 482px; display: flex; flex: none; }
.side { width: 37px; flex: none; padding-left: 3px; }
.side-head { height: 17px; display: flex; align-items: center; }
.side-tag { width: 15px; height: 12px; background: #7a9ad8; color: #e8f0ff; font: 11px/12px "Noto Sans CJK SC", sans-serif; text-align: center; }
.side-x { margin-left: 3px; font: bold 13px/12px "Liberation Sans", sans-serif; color: #222; }
.side-body { display: flex; height: 465px; }
.rows { width: 11px; flex: none; padding-top: 18px; background-image: linear-gradient(#e0dcc8 1px, transparent 1px), linear-gradient(90deg, #e0dcc8 1px, transparent 1px); background-size: 5px 5px; display: flex; flex-direction: column; }
.rows i { height: 20px; display: flex; align-items: center; justify-content: flex-end; flex: none; }
.rows i::after { content: ""; border-style: solid; border-width: 3px 4px 3px 0; border-color: transparent; margin-right: 0; }
.rows .g::after { border-right-color: #0a8a10; }
.rows .r::after { border-right-color: #a03010; }
.vs { width: 16px; height: 460px; margin-left: 0; display: flex; flex-direction: column; }
.sbtn { width: 16px; height: 16px; flex: none; display: block; border-radius: 2px; border: 1px solid #fff; background: linear-gradient(90deg, #c8d8f4, #b8ccf0); }
.sbtn svg { display: block; margin: -1px; }
.thumb { height: 92px; margin-top: 3px; flex: none; border: 1px solid #fff; border-radius: 2px; background: linear-gradient(90deg, #c6d6f8, #aec4f0); position: relative; }
.thumb u { position: absolute; left: 4px; right: 4px; top: 42px; height: 7px; border-top: 1px solid #eef; border-bottom: 1px solid #eef; }
.track { flex: 1; background: #f9f8f0; }
.chart { display: block; background: #020206; shape-rendering: crispEdges; flex: none; margin-left: 0; }
.grid { stroke: #fff; stroke-dasharray: 4 2; fill: none; }
.cyanl { stroke: #20c4cc; fill: none; }
.tanl { stroke: #b0ac98; fill: none; }
.fib { stroke: #ff0; fill: none; }
.bidl { stroke: #8c8c8c; fill: none; }
.ordl { stroke: #30d030; stroke-dasharray: 9 7 2 6; fill: none; }
.fibd { stroke: #ff0; stroke-dasharray: 3 5; fill: none; }
.fiba { fill: none; stroke: #ff0; }
.bb { fill: none; stroke: #b050c8; }
.cw { stroke: #18e8f0; fill: none; }
.cb { stroke: #18e8f0; stroke-width: 3; fill: none; }
.rw { stroke: #f01010; fill: none; }
.rb { stroke: #f01010; stroke-width: 3; fill: none; }
.wave { stroke: #fff; stroke-width: 3.500; fill: none; }
.wave2 { stroke: #fff; stroke-width: 2.500; fill: none; }
.frame { fill: none; stroke: #fff; }
.levels { stroke: #ddd; stroke-dasharray: 4 3; fill: none; }
.rsi { fill: none; stroke: #f0b400; }
.tri { fill: #8c8c8c; }
.ticks { stroke: #fff; fill: none; }
.lab { font-size: 9.800px; fill: #f0f0f0; }
.lab-v { font-size: 9.200px; }
.lab-r { font-size: 9.400px; }
.fibt text { font-size: 10px; fill: #dcdc00; text-anchor: end; }
.wavet text { font-size: 21px; fill: #fff; text-anchor: middle; }
.wavet .sm { font-size: 17px; }
.axis text { font-size: 9.200px; fill: #fff; }
.tag { fill: #fff; }
.tagt { font-size: 9.200px; fill: #000; }
.dates text { font-size: 9.400px; fill: #fff; }

/* chart tabs */
.charttabs { height: 21px; flex: none; display: flex; align-items: stretch; border-top: 2px solid #111; font-size: 10px; color: #808070; position: relative; padding-left: 40px; }
.sidetab { position: absolute; left: 6px; top: -3px; width: 26px; height: 17px; border: 1px solid #111; border-top: 0; background: #fff; font: 12px/16px "Noto Sans CJK SC", sans-serif; color: #222; text-align: center; white-space: nowrap; overflow: hidden; }
.sidetab small { font-size: 8px; }
.ct { padding: 0 12px 0 11px; position: relative; line-height: 17px; white-space: nowrap; }
.ct::after { content: ""; position: absolute; right: 0; top: 3px; height: 12px; width: 1px; background: #807c70; }
.ct-on { background: #f8f7ee; color: #111; padding: 0 9px 0 7px; border: 1px solid #111; border-top: 0; border-width: 0 2px 2px 1px; height: 19px; }
.ct-on::after { display: none; }
.ct-nav { margin-left: auto; display: flex; gap: 7px; padding-right: 5px; font-size: 10px; line-height: 16px; color: #777; }

/* terminal */
.terminal { height: 103px; flex: none; display: flex; padding-top: 4px; border-bottom: 1px solid #d8d4c0; }
.term-side { width: 15px; flex: none; padding-left: 1px; }
.term-x { display: block; font: bold 12px/13px "Liberation Sans", sans-serif; color: #222; text-align: center; }
.term-bar { margin-top: 1px; width: 13px; height: 82px; background: linear-gradient(#6f96de, #8eaae8); color: #c8d4f0; font: 11px/12px "Noto Sans CJK SC", sans-serif; writing-mode: vertical-rl; padding-top: 56px; }
.term-main { width: 1005px; flex: none; display: flex; flex-direction: column; }
.term-top { height: 58px; display: flex; flex: none; }
.tablewrap { width: 987px; height: 58px; overflow: hidden; flex: none; background: #f4f2e8; border: 1px solid #b0ac98; border-width: 1px 0 0 1px; }
.trow { display: grid; grid-template-columns: 99px 167px 68px 54px 68px 76px 76px 76px 76px 76px 76px 92px; width: 1004px; height: 20px; background: #fff; font: 10px/19px "Liberation Mono", "Noto Sans CJK SC", monospace; color: #444; border-bottom: 1px solid #c8c8c8; }
.trow.alt { background: #e8e8e4; background-image: radial-gradient(circle at 1px 1px, #fff .6px, transparent 1px); background-size: 3px 3px; }
.trow span { text-align: right; padding-right: 2px; border-right: 1px solid #c8c8c8; white-space: nowrap; }
.trow .lft { text-align: left; padding-left: 25px; position: relative; }
.doc { position: absolute; left: 3px; top: 2px; }
.thead { height: 20px; background: #ece9d8; background-image: radial-gradient(circle at 1px 1px, #f8f6ec .7px, transparent 1px); background-size: 3px 3px; font: 12px/18px "Noto Sans CJK SC", sans-serif; border-bottom: 3px solid #c8c4b4; }
.thead span { padding-right: 6px; border-right: 1px solid #fff; }
.thead .lft { padding-left: 13px; }
.thead sub { margin-left: 13px; font-size: 8px; color: #666; vertical-align: baseline; }
.tvs { width: 16px; margin-left: 1px; height: 54px; display: flex; flex-direction: column; flex: none; }
.tall { height: 19px; }
.tvthumb { height: 8px; flex: none; border: 1px solid #fff; border-radius: 2px; background: #b8ccf0; }
.hs { width: 982px; height: 16px; margin-left: 1px; flex: none; display: flex; background: #f4f3ea; }
.hbtn { width: 17px; height: 16px; flex: none; border: 1px solid #fff; border-radius: 2px; background: linear-gradient(#c8d8f4, #b8ccf0); display: block; }
.hbtn svg { display: block; margin: -1px 0 0 0; }
.hthumb { width: 927px; margin-left: 2px; margin-right: 19px; border: 1px solid #fff; border-radius: 2px; background: linear-gradient(#c6d6fa, #b4c9f6); position: relative; }
.hthumb u { position: absolute; left: 459px; top: 3px; bottom: 3px; width: 8px; border-left: 3px double #eef; border-right: 3px double #eef; }
.ttabs { height: 20px; margin-top: 1px; width: 1005px; flex: none; display: flex; border-top: 1px solid #111; font: 12px/19px "Noto Sans CJK SC", sans-serif; color: #808070; }
.tt-on { width: 44px; margin-left: 3px; margin-top: -1px; height: 20px; background: #fff; border: 1px solid #111; border-width: 0 1px 1px 1px; color: #111; text-align: center; }
.tt-i { padding: 0 11px 0 9px; position: relative; white-space: nowrap; }
.tt-i:first-of-type { padding-left: 10px; }
.tt-i::after { content: ""; position: absolute; right: 0; top: 3px; height: 12px; width: 1px; background: #807c70; }

/* status */
.status { height: 22px; flex: none; display: grid; grid-template-columns: 43px 190px 135px 99px 98px 100px 99px 99px 1fr; align-items: center; position: relative; font: 10px "Liberation Mono", "Noto Sans CJK SC", monospace; color: #444; white-space: nowrap; }
.status > span { border-right: 1px solid #a8a490; height: 17px; line-height: 17px; padding-left: 5px; overflow: hidden; }
.status .s1 { padding-left: 4px; font-size: 11px; }
.status .s9 { border: 0; display: flex; align-items: center; padding-left: 5px; }
.s9 em { font-style: normal; margin-left: 23px; }
.logo { position: absolute; left: 11px; top: -5px; white-space: nowrap; color: #ee5a00; text-shadow: 1px 1px 0 #ffc800; pointer-events: none; }
.logo-c { font: italic 400 23px/28px "Noto Sans CJK SC", sans-serif; letter-spacing: 3px; color: #f0a800; text-shadow: 1px 1px 0 #c04000; }
.logo-e { font: italic bold 20px/28px "Liberation Sans", sans-serif; margin-left: -3px; }
.sizegrip { position: absolute; right: 0; bottom: 0; }
.bluefoot { height: 4px; flex: none; background: linear-gradient(#0a50d8, #0a3fb0); }
```
